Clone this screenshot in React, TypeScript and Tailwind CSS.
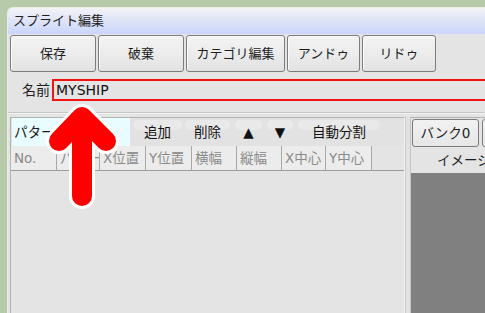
import React from "react";

const font = { fontFamily: '"DejaVu Sans", "Noto Sans CJK JP", sans-serif' };

function Btn({ w, children }: { w: string; children: React.ReactNode }) {
  return (
    <div
      className={`${w} h-[37px] shrink-0 rounded-[3px] border border-[#7c7c7c] bg-gradient-to-b from-[#f3f3f3] via-[#ececec] to-[#e2e2e2] flex items-center justify-center text-[13px] text-[#1e1e1e] shadow-[inset_1px_1px_0_#fbfbfb]`}
    >
      {children}
    </div>
  );
}

function ToolBtn({ w, children }: { w: string; children: React.ReactNode }) {
  return (
    <div className={`${w} h-[26px] shrink-0 relative flex items-center justify-center`}>
      <div className="absolute left-0 right-0 top-[1px] h-[10px] rounded-[5px] bg-[#e9e9e9]" />
      <span className="relative text-[13.5px] text-[#111]">{children}</span>
    </div>
  );
}

function Head({ w, children }: { w: string; children?: React.ReactNode }) {
  return (
    <div className={`${w} shrink-0 h-full border-r border-[#a9a9a9] bg-[#ececec] flex items-center pl-[3px] text-[13.5px] text-[#8a8a8a] overflow-hidden whitespace-nowrap`}>
      <span className="overflow-hidden">{children}</span>
    </div>
  );
}

export default function App() {
  return (
    <div
      lang="ja"
      className="relative w-[485px] h-[313px] overflow-hidden bg-[#b7cbaa] pl-[7px] pt-[7px]"
      style={font}
    >
      <div className="w-[560px] h-[320px] bg-[#e4e4e4] rounded-tl-[6px] border-l border-t border-[#e9eee4] flex flex-col">
        {/* title bar */}
        <div className="h-[26px] shrink-0 rounded-tl-[5px] bg-gradient-to-b from-[#f3f3f5] to-[#c9d5fb] flex items-center pl-[5px] text-[13px] text-[#1e1e1e]">
          スプライト編集
        </div>
        {/* button row */}
        <div className="flex gap-[2px] pl-[2px] pt-[1px]">
          <Btn w="w-[86px]">保存</Btn>
          <Btn w="w-[86px]">破棄</Btn>
          <Btn w="w-[99px]">カテゴリ編集</Btn>
          <Btn w="w-[73px]">アンドゥ</Btn>
          <Btn w="w-[74px]">リドゥ</Btn>
        </div>
        {/* name row */}
        <div className="h-[40px] shrink-0 flex items-start pt-[7px] pl-[14px]">
          <span className="text-[14px] text-[#1e1e1e] leading-[22px] w-[30px]">名前</span>
          <div className="flex-1 h-[22px] border-2 border-[#f21414] flex items-center pl-[2px] text-[14px] text-[#111]">
            MYSHIP
          </div>
        </div>
        {/* separator */}
        <div className="h-[1px] bg-[#c6c6c6]" />
        <div className="h-[1px] bg-[#f2f2f2]" />
        <div className="h-[3px]" />
        {/* bottom area */}
        <div className="flex flex-1 pl-[2px]">
          {/* left panel */}
          <div className="w-[395px] flex flex-col border-l border-t border-r border-[#b3b3b3] border-r-[#f2f2f2]">
            <div className="h-[28px] shrink-0 flex items-center bg-[#e2e2e2] pl-[1px]">
              <div className="w-[118px] h-full bg-[#e9fcff] flex items-center pl-[2px] text-[13.5px] text-[#1a1a1a]">
                パターン
              </div>
              <div className="w-[3px]" />
              <ToolBtn w="w-[49px]">追加</ToolBtn>
              <div className="w-[3px]" />
              <ToolBtn w="w-[45px]">削除</ToolBtn>
              <div className="w-[5px]" />
              <ToolBtn w="w-[27px]">▲</ToolBtn>
              <div className="w-[5px]" />
              <ToolBtn w="w-[26px]">▼</ToolBtn>
              <div className="w-[5px]" />
              <ToolBtn w="w-[82px]">自動分割</ToolBtn>
            </div>
            <div className="h-[25px] shrink-0 flex border-b border-[#9c9c9c] bg-[#e4e4e4]">
              <Head w="w-[46px]">No.</Head>
              <Head w="w-[43px]">パターン</Head>
              <Head w="w-[46px]">X位置</Head>
              <Head w="w-[46px]">Y位置</Head>
              <Head w="w-[45px]">横幅</Head>
              <Head w="w-[45px]">縦幅</Head>
              <Head w="w-[44px]">X中心</Head>
              <Head w="w-[46px]">Y中心</Head>
            </div>
            <div className="flex-1 bg-[#e4e4e4]" />
          </div>
          {/* splitter */}
          <div className="w-[6px] flex">
            <div className="w-[1px] bg-[#cbcbcb]" />
            <div className="w-[4px] bg-[#e2e2e2]" />
            <div className="w-[1px] bg-[#c4c4c4]" />
          </div>
          {/* right panel */}
          <div className="flex-1 flex flex-col border-t border-[#b3b3b3]">
            <div className="h-[30px] shrink-0 flex items-start pt-[1px] pl-[1px] gap-[3px]">
              <div className="w-[67px] h-[28px] rounded-[3px] border border-[#7c7c7c] bg-gradient-to-b from-[#f2f2f2] to-[#e6e6e6] flex items-center justify-center text-[13.5px] text-[#1e1e1e]">
                バンク0
              </div>
              <div className="w-[67px] h-[28px] rounded-[3px] border border-[#7c7c7c] bg-gradient-to-b from-[#f2f2f2] to-[#e6e6e6] flex items-center justify-center text-[13.5px] text-[#1e1e1e]">
                バンク1
              </div>
            </div>
            <div className="h-[25px] shrink-0 flex items-center pl-[26px] text-[13.5px] text-[#1e1e1e]">
              イメージ
            </div>
            <div className="flex-1 bg-[#808080]" />
          </div>
        </div>
      </div>

      {/* red arrow annotation */}
      <svg className="absolute left-0 top-0" width="485" height="313" viewBox="0 0 485 313">
        <path
          d="M82 196 L82 118 M59 141 L82 117 L106 141"
          fill="none"
          stroke="#ffffff"
          strokeWidth="26"
          strokeLinecap="round"
          strokeLinejoin="round"
        />
        <path
          d="M82 196 L82 118 M59 141 L82 117 L106 141"
          fill="none"
          stroke="#ff0000"
          strokeWidth="20"
          strokeLinecap="round"
          strokeLinejoin="round"
        />
      </svg>
    </div>
  );
}
